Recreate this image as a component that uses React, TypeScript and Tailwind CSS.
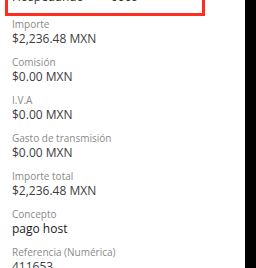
import React from "react";

// Transfer detail rows
const ROWS = [
    { label: "Importe", value: "$2,236.48 MXN" },
    { label: "Comisión", value: "$0.00 MXN" },
    { label: "I.V.A", value: "$0.00 MXN" },
    { label: "Gasto de transmisión", value: "$0.00 MXN" },
    { label: "Importe total", value: "$2,236.48 MXN" },
    { label: "Concepto", value: "pago host", dark: true },
    { label: "Referencia (Numérica)", value: "411653" },
];

export default function App() {
    return (
        <div className="flex h-[268px] w-[256px] overflow-hidden bg-white" style={{ fontFamily: '"Open Sans", "Liberation Sans", sans-serif' }}>
            <div className="flex w-[245px] flex-col">
                {/* Highlighted account box, cut at top */}
                <div className="-mt-[14px] ml-[5px] w-[200px] border-[3px] border-[#ff2d1f] pb-[8px] pl-[4px]">
                    <div className="flex text-[12px] leading-[16px] text-[#333]">
                        <span className="w-[99px]">Hospedando</span>
                        <span>0009</span>
                    </div>
                </div>

                <div className="mt-[2px] flex flex-col gap-[9px] pl-[12px]">
                    {ROWS.map((row) => (
                        <div key={row.label} className="flex flex-col">
                            <span className="text-[10px] leading-[12px] text-[#8a8a8a]">{row.label}</span>
                            <span className={row.dark ? "text-[12px] leading-[17px] text-[#1a1a1a]" : "text-[12px] leading-[17px] text-[#3d3d3d]"}>
                                {row.value}
                            </span>
                        </div>
                    ))}
                </div>
            </div>
            <div className="h-full w-[11px] bg-black" />
        </div>
    );
}
